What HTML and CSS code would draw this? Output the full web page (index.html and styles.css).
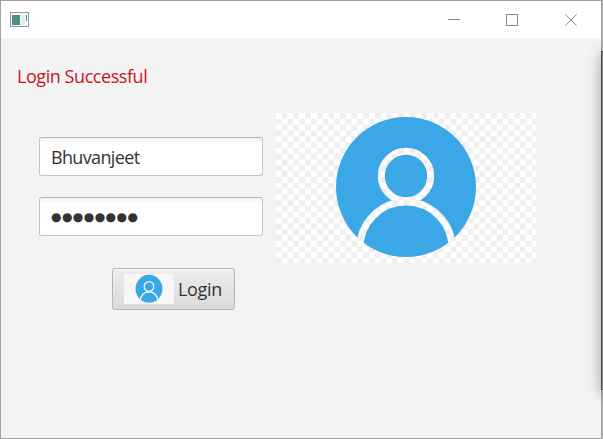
FILE: index.html
```html
<!DOCTYPE html>
<html lang="en">
<head>
<meta charset="utf-8">
<title>Login</title>
<link rel="stylesheet" href="styles.css">
</head>
<body>
<svg class="defs" aria-hidden="true">
  <defs>
    <pattern id="checks" width="11.62" height="11.62" patternUnits="userSpaceOnUse">
      <rect width="11.62" height="11.62" fill="#fff"/>
      <path d="M5.81 0h5.81v5.81H5.81zM0 5.81h5.81v5.81H0z" fill="#efefef"/>
    </pattern>
    <mask id="person" maskUnits="userSpaceOnUse" x="0" y="0" width="260" height="150">
      <circle cx="130" cy="74" r="70" fill="#fff"/>
      <g fill="none" stroke="#000" stroke-width="7">
        <circle cx="130" cy="63" r="24.7"/>
        <path d="M84 150v-15a46 46 0 0 1 92 0v15"/>
      </g>
    </mask>
    <symbol id="avatar" viewBox="0 0 260 150" preserveAspectRatio="none">
      <rect width="260" height="150" fill="url(#checks)"/>
      <rect width="260" height="150" fill="#3ba7e7" mask="url(#person)"/>
    </symbol>
  </defs>
</svg>
<div class="window">
  <header class="titlebar">
    <svg class="app-icon" width="19" height="15" viewBox="0 0 19 15">
      <rect x=".5" y=".5" width="18" height="14" fill="#f7fafa" stroke="#8f9b9f"/>
      <rect x="2" y="3" width="8" height="10" fill="#4b9189"/>
      <rect x="11" y="3" width="4" height="10" fill="#e4e9ec"/>
      <rect x="16" y="3" width="1" height="6" fill="#4b8a80"/>
    </svg>
    <svg class="controls" width="130" height="14" viewBox="0 0 130 14" fill="none" stroke="#8b8b8b">
      <path d="M0 6.5h12"/>
      <rect x="58.5" y="1.5" width="11" height="11"/>
      <path d="M117.3 1.3l11.4 11.4M128.7 1.3l-11.4 11.4"/>
    </svg>
  </header>
  <main class="content">
    <div class="message">Login Successful</div>
    <div class="columns">
      <form class="form">
        <div class="field"><span class="name">Bhuvanjeet</span></div>
        <div class="field"><span class="password">●●●●●●●●</span></div>
        <button class="login" type="button">
          <svg width="50" height="30"><use href="#avatar" width="50" height="30"/></svg>
          <span>Login</span>
        </button>
      </form>
      <svg class="picture" width="260" height="150"><use href="#avatar" width="260" height="150"/></svg>
    </div>
  </main>
</div>
<div class="neighbor"><div class="edge"></div></div>
</body>
</html>
```
FILE: styles.css
```css
* { box-sizing: border-box; }
body {
  margin: 0;
  width: 603px;
  height: 439px;
  display: flex;
  overflow: hidden;
  background: #b5b5b5;
  font-family: "Open Sans", "Noto Sans", sans-serif;
  font-size: 18px;
  color: #333;
}
.defs { position: absolute; width: 0; height: 0; }
.window {
  width: 602px;
  height: 439px;
  border: 1px solid #a2a2a2;
  background: #f3f3f3;
}
.titlebar {
  height: 37px;
  padding: 0 23px 0 9px;
  display: flex;
  align-items: center;
  justify-content: space-between;
  background: #fff;
}
.titlebar svg { display: block; }
.content { padding-top: 26px; }
.message {
  height: 25px;
  padding-left: 16px;
  line-height: 25px;
  color: #c4161f;
  letter-spacing: -.44px;
}
.columns { display: flex; gap: 13px; padding: 24px 0 0 38px; }
.form { width: 224px; padding-top: 24px; display: flex; flex-direction: column; }
.field {
  width: 224px;
  height: 39px;
  margin-bottom: 21px;
  padding: 0 11px;
  display: flex;
  align-items: center;
  border: 1px solid #c5c5c5;
  border-top-color: #b2b2b2;
  border-radius: 3px;
  background: linear-gradient(#f3f3f3, #fff 5px);
}
.name { letter-spacing: -.65px; }
.password { font: 12px/20px "DejaVu Sans", sans-serif; letter-spacing: .45px; padding-top: 1px; }
.login {
  width: 123px;
  height: 42px;
  margin: 11px 0 0 73px;
  padding: 0 11px;
  display: flex;
  align-items: center;
  gap: 4px;
  border: 1px solid #b5b5b5;
  border-radius: 3px;
  background: linear-gradient(#ededed, #dadada);
  box-shadow: inset 0 1px #f8f8f8;
  font: inherit;
  color: inherit;
  letter-spacing: -.3px;
}
.login svg { flex: none; }
.picture { display: block; flex: none; }
.neighbor {
  position: absolute;
  left: 581px;
  top: 30px;
  width: 22px;
  height: 380px;
  padding-top: 21px;
  overflow: hidden;
}
.edge {
  width: 10px;
  height: 339px;
  margin-left: 20px;
  border: 1px solid #4a4a4a;
  background: #858585;
  box-shadow: 0 3px 14px rgba(0, 0, 0, .38);
}
```
